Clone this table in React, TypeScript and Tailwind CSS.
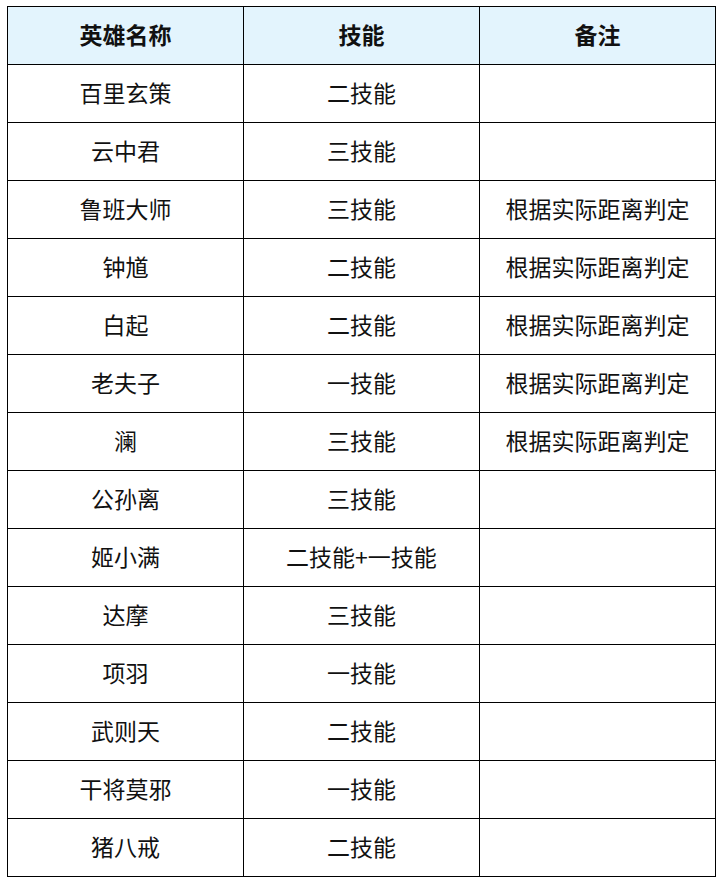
const rows: [string, string, string][] = [
  ["百里玄策", "二技能", ""],
  ["云中君", "三技能", ""],
  ["鲁班大师", "三技能", "根据实际距离判定"],
  ["钟馗", "二技能", "根据实际距离判定"],
  ["白起", "二技能", "根据实际距离判定"],
  ["老夫子", "一技能", "根据实际距离判定"],
  ["澜", "三技能", "根据实际距离判定"],
  ["公孙离", "三技能", ""],
  ["姬小满", "二技能+一技能", ""],
  ["达摩", "三技能", ""],
  ["项羽", "一技能", ""],
  ["武则天", "二技能", ""],
  ["干将莫邪", "一技能", ""],
  ["猪八戒", "二技能", ""],
]

export default function App() {
  return (
    <div
      className="min-h-[889px] w-[722px] bg-white pl-[7px] pt-[6px]"
      style={{ fontFamily: '"Noto Sans CJK SC", "Noto Sans", sans-serif' }}
    >
      <table className="w-[709px] table-fixed border-collapse text-[23px] text-[#111]">
        <thead>
          <tr className="bg-[#e3f4fd]">
            <th className="h-[58px] border border-black pb-[3px] font-bold">英雄名称</th>
            <th className="h-[58px] border border-black pb-[3px] font-bold">技能</th>
            <th className="h-[58px] border border-black pb-[3px] font-bold">备注</th>
          </tr>
        </thead>
        <tbody>
          {rows.map(([hero, skill, note]) => (
            <tr key={hero}>
              <td className="h-[58px] border border-black pb-[3px] text-center">{hero}</td>
              <td className="h-[58px] border border-black pb-[3px] text-center">{skill}</td>
              <td className="h-[58px] border border-black pb-[3px] text-center">{note}</td>
            </tr>
          ))}
        </tbody>
      </table>
    </div>
  )
}
